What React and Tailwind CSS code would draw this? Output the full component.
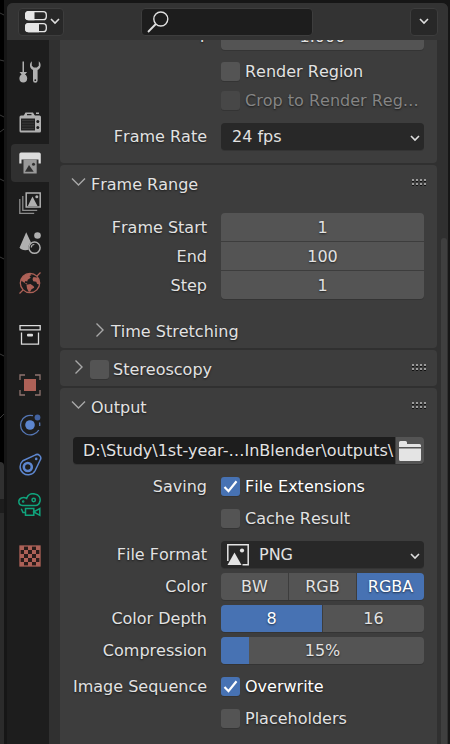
import React from "react";

const GRAY = "#b0b0b0";
const RED = "#ad6157";
const BLUE = "#5d86cf";
const GREEN = "#10a37c";
const DARK = "#1d1d1d";

const icons = {
  Tool: (
    <g fill={GRAY}>
      <path d="M4.500 1.500h1.500V12H4.500z" />
      <path d="M1.500 12h7.600L7 14.400c1.600 1 2.200 2.400 2.200 4.200 0 2.400-1.600 4-3.900 4s-3.900-1.600-3.900-4c0-1.800.6-3.200 2.200-4.200z" />
      <path d="M13.800 1.200C11.200 3.500 11.200 8 15 10v10.400a2.300 2.300 0 0 0 4.600 0V10c3.800-2 3.800-6.500 1.200-8.800V5.800l-2 1.700h-3l-2-1.700z" />
      <circle cx="17.3" cy="20.200" r=".9" fill={DARK} />
    </g>
  ),
  Render: (
    <g fill={GRAY}>
      <path d="M5.500 5 7.500 1.500h7.500l2 3.500zM18 1.500h3v1.500h-3z" />
      <rect x="1.500" y="4.500" width="21.500" height="17" rx="1.500" />
      <path d="M9 3h4.500v1.200H9zM3 7.500h14v12H3z" fill="#222" />
      <path d="M4 9.500h12M4 12.200h12M4 14.900h12M4 17.600h12" stroke="#383838" strokeWidth="1" />
      <circle cx="19.800" cy="10.500" r="1.500" fill={DARK} />
      <circle cx="19.800" cy="16.500" r="1.500" fill={DARK} />
    </g>
  ),
  Output: (
    <g>
      <path d="M3 1.500h18a1.800 1.800 0 0 1 1.800 1.800V12.500h-2.300V8.500h-17v4H1.300V3.300A1.800 1.800 0 0 1 3 1.500z" fill="#dcdcdc" />
      <path d="M5.500 8.500h13.200V22.500H5.500z" fill="#999" />
      <path d="M7 20.800 11 14l4.700 6.800z" fill="#303030" />
      <circle cx="15.500" cy="13.300" r="1.500" fill="#303030" />
    </g>
  ),
  "View Layer": (
    <g fill="none" stroke={GRAY}>
      <path d="M1.800 8v14.300h14.400M4.800 5v14.300h14.400" strokeWidth="1.300" stroke="#8c8c8c" />
      <rect x="8.200" y="2" width="14" height="14" strokeWidth="1.500" />
      <path d="m9.800 15 4.700-9.500L19.500 15z" fill={GRAY} stroke="none" />
      <circle cx="18.800" cy="5.700" r="1.500" fill={GRAY} stroke="none" />
    </g>
  ),
  Scene: (
    <g fill={GRAY}>
      <path d="M8.200 1.200 13 11.500c-2.500 2-3 4.500-2.300 7.200-4 1-7.500.2-9.200-2z" />
      <circle cx="19.500" cy="4.500" r="3.300" />
      <circle cx="16.500" cy="16.700" r="5.600" fill={DARK} stroke={GRAY} strokeWidth="1.500" />
      <path d="M13.300 16.500a3 3 0 0 1 3-3" fill="none" stroke={GRAY} strokeWidth="1.200" />
    </g>
  ),
  World: (
    <g fill={RED}>
      <circle cx="12" cy="12" r="9.700" fill="none" stroke={RED} strokeWidth="1.300" />
      <path d="M1.500 22.500 5 19M19 5l3.500-3.500" stroke={RED} strokeWidth="1.300" />
      <path d="M3 8.500C4.500 5 8 2.700 12 2.500l1.500 1.800-2 .7 1.200 1.700-3 2.100-.4 1.800-2-.6-.6 1.700 2.500.7-.3 1.200L3 9.500zM8.500 13.800l4-.8 3.200 2.200.5 1.600-2.700 1.400-1.300 2.500h-1.500L9 17.500zM15.500 6l4.500.7 1.300 3.300.2 3.500-2.300-.5-1-2.200-3-.6-.7-2.300z" />
    </g>
  ),
  Collection: (
    <g fill="none" stroke="#dcdcdc" strokeWidth="1.300">
      <path d="M2 3.700h20.200v4.200H2zM3.500 10.500v11.700h17V10.500" />
      <rect x="9" y="11.700" width="6" height="2.800" rx="1" fill="#dcdcdc" stroke="none" />
    </g>
  ),
  Object: (
    <g>
      <path d="M6 6h12v12H6z" fill={RED} />
      <path d="M2 7V2h5M17 2h5v5M22 17v5h-5M7 22H2v-5" fill="none" stroke="#8e736f" strokeWidth="1.300" />
    </g>
  ),
  Physics: (
    <g fill={BLUE}>
      <circle cx="12" cy="12" r="4.800" />
      <circle cx="19.500" cy="4.500" r="2.900" fill="#4262a0" />
      <path d="M15 2.700A9.800 9.800 0 1 0 20.800 17M21.500 9.500a9.800 9.800 0 0 1 .2 3.500" fill="none" stroke="#5577b5" strokeWidth="1.300" />
    </g>
  ),
  Constraints: (
    <g fill="none" stroke={BLUE}>
      <path d="M4.800 7.800 17 2.200A3.600 3.600 0 0 1 22.200 7L17.200 17.500A8 8 0 1 1 4.800 7.800z" strokeWidth="1.500" />
      <circle cx="9.800" cy="14" r="4" strokeWidth="2.600" />
      <circle cx="18.200" cy="5.900" r="1.300" fill={BLUE} stroke="none" />
    </g>
  ),
  Data: (
    <g fill="none" stroke={GREEN} strokeWidth="1.500">
      <path d="M4.500 12.500a4 4 0 0 1-3.700-4c0-3.200 4.400-5.300 7.800-3C10 .8 14 .2 17 1c4 .8 5.700 4 5 7.300-.6 2.500-2.500 4.200-4.500 4.200z" />
      <circle cx="15.700" cy="7" r="1.700" />
      <circle cx="5.200" cy="8.500" r=".5" />
      <path d="M7.500 15.500h8.300v6.800H7.500zM15.800 18.900l6-3.400v6.800zM7.500 19.500H5l-1.700-3.800" />
    </g>
  ),
  Texture: (
    <g>
      <rect x="2" y="2" width="20" height="20" fill="#291c1a" stroke={RED} strokeWidth="1.300" />
      <path d="M2 2h4v4H2zM10 2h4v4h-4zM18 2h4v4h-4zM6 6h4v4H6zM14 6h4v4h-4zM2 10h4v4H2zM10 10h4v4h-4zM18 10h4v4h-4zM6 14h4v4H6zM14 14h4v4h-4zM2 18h4v4H2zM10 18h4v4h-4zM18 18h4v4h-4z" fill={RED} />
    </g>
  ),
};

const tabGroups = [
  ["Tool"],
  ["Render", "Output", "View Layer", "Scene", "World"],
  ["Collection"],
  ["Object", "Physics", "Constraints", "Data"],
  ["Texture"],
];

const raised = "shadow-[0_1px_0_#343434]";

function Chevron({ className = "" }) {
  return (
    <svg aria-hidden="true" viewBox="0 0 10 7" className={`h-[7px] w-[10px] ${className}`}>
      <path d="m1 1 4 4 4-4" fill="none" stroke="#dedede" strokeWidth="1.600" />
    </svg>
  );
}

function Disclosure({ open }) {
  return (
    <svg aria-hidden="true" viewBox="0 0 16 16" className="size-4 shrink-0">
      <path
        d={open ? "m2 4.500 6.500 6.500L15 4.500" : "m5.500 1.500 6.500 6.500-6.500 6.500"}
        fill="none"
        stroke="#a8a8a8"
        strokeWidth="1.400"
      />
    </svg>
  );
}

function Grip() {
  return (
    <svg aria-hidden="true" viewBox="0 0 14 7" className="mb-1 ml-auto h-[7px] w-[14px]">
      {[0, 4, 8, 12].map((x) => (
        <g key={x}>
          <path d={`M${x} 0h2v2h-2zM${x} 4h2v2h-2z`} fill="#9a9a9a" />
          <path d={`M${x} 2h2v1h-2zM${x} 6h2v1h-2z`} fill="#111" />
        </g>
      ))}
    </svg>
  );
}

function PanelHeader({ title, open, children }) {
  return (
    <div className="flex h-9 items-center pl-[10px] pr-[11px] pt-0.5">
      <button type="button" aria-expanded={open} aria-label={title} className="mb-1 flex">
        <Disclosure open={open} />
      </button>
      {children || <h2 className="ml-[5px]">{title}</h2>}
      <Grip />
    </div>
  );
}

function Tick({ id, checked, disabled }) {
  return (
    <span className="relative flex size-[19px] shrink-0">
      <input
        id={id}
        type="checkbox"
        defaultChecked={checked}
        disabled={disabled}
        className={`peer size-[19px] appearance-none rounded-[3px] bg-[#545454] checked:bg-[#4772b3] disabled:bg-[#474747] ${raised}`}
      />
      <svg aria-hidden="true" viewBox="0 0 19 19" className="pointer-events-none absolute inset-0 hidden peer-checked:block">
        <path d="m3.500 10 4 4.200 8-10" fill="none" stroke="#fff" strokeWidth="2.200" />
      </svg>
    </span>
  );
}

function CheckRow({ id, label, checked, disabled, lead = "" }) {
  return (
    <div className="flex h-[19px] items-center gap-[14px]">
      <span className="w-[134px] shrink-0 whitespace-nowrap text-right">{lead}</span>
      <div className="flex min-w-0 flex-1 items-center gap-[5px]">
        <Tick id={id} checked={checked} disabled={disabled} />
        <label
          htmlFor={id}
          className={`whitespace-nowrap ${disabled ? "text-[#858585]" : checked ? "text-white" : ""}`}
        >
          {label}
        </label>
      </div>
    </div>
  );
}

function Row({ label, htmlFor, children }) {
  return (
    <div className="flex items-center gap-[14px]">
      <label htmlFor={htmlFor} className="w-[134px] shrink-0 whitespace-nowrap text-right">
        {label}
      </label>
      <div className="min-w-0 flex-1">{children}</div>
    </div>
  );
}

function NumberField({ id, value, round = "" }) {
  return (
    <input
      id={id}
      type="text"
      inputMode="numeric"
      defaultValue={value}
      className={`block h-7 w-full bg-[#545454] text-center [text-shadow:inherit] ${round}`}
    />
  );
}

function Dropdown({ id, value, pad, children }) {
  return (
    <div className={`relative h-[27px] rounded bg-[#282828] ${raised}`}>
      <select id={id} className={`h-[27px] w-full appearance-none bg-transparent ${pad}`}>
        <option>{value}</option>
      </select>
      {children}
      <Chevron className="pointer-events-none absolute right-1 top-3" />
    </div>
  );
}

function Choice({ name, options, selected }) {
  return (
    <div role="group" aria-label={name} className={`flex h-[27px] gap-px overflow-hidden rounded ${raised}`}>
      {options.map((o) => (
        <button
          key={o}
          type="button"
          aria-pressed={o === selected}
          className={`flex-1 [text-shadow:inherit] ${o === selected ? "bg-[#4772b3] text-white" : "bg-[#545454]"}`}
        >
          {o}
        </button>
      ))}
    </div>
  );
}

export default function App() {
  return (
    <div className="flex h-screen overflow-hidden bg-[#161616] font-['DejaVu_Sans',sans-serif] text-base leading-[19px] text-[#e2e2e2] [font-kerning:none]">
      <div className="flex w-1 shrink-0 flex-col bg-black">
        <svg aria-hidden="true" viewBox="0 0 4 462" className="h-[462px] w-1">
          <path
            d="M0 13l4 2M0 60l4 1M0 115l4 2M0 132l4-3M0 179l4 2M0 257l4 2M0 354l4 2M0 418l4-4"
            fill="none"
            stroke="#3a3a3a"
          />
        </svg>
        <div className="h-[37px] rounded-tr bg-[#303030]" />
        <div className="h-[14px] bg-[#1d1d1d]" />
        <div className="flex-1 bg-[#2b2b2b]" />
      </div>
      <div className="ml-[3px] mr-[2px] mt-[3px] flex min-w-0 flex-1 flex-col overflow-hidden rounded-t-md bg-[#303030]">
        <header className="flex h-[37px] shrink-0 items-center justify-between bg-[#333333] pl-[11px] pr-[10px]">
          <button
            type="button"
            aria-label="Editor type"
            className="flex h-7 w-[46px] items-center gap-[3px] rounded border border-[#3d3d3d] bg-[#282828] pl-1.5"
          >
            <svg aria-hidden="true" viewBox="0 0 22 22" className="size-[22px] shrink-0">
              <rect x=".7" y=".7" width="20.600" height="8" rx="3" fill="none" stroke="#e6e6e6" strokeWidth="1.300" />
              <path d="M3.500 0H9.500v9.300h-6A3 3 0 0 1 0 6V3.500A3.500 3.500 0 0 1 3.500 0z" fill="#e6e6e6" />
              <rect x=".7" y="12.700" width="20.600" height="8" rx="3" fill="none" stroke="#e6e6e6" strokeWidth="1.300" />
              <path d="M3.500 12H14v9.300H3.500A3.400 3.400 0 0 1 0 18v-2.500A3.500 3.500 0 0 1 3.500 12z" fill="#e6e6e6" />
            </svg>
            <Chevron />
          </button>
          <div className="ml-[22px] flex h-7 w-[172px] items-center rounded border border-[#3d3d3d] bg-[#1d1d1d] pl-[5px]">
            <svg aria-hidden="true" viewBox="0 0 22 22" className="size-[22px] shrink-0">
              <circle cx="13.800" cy="8" r="7" fill="none" stroke="#e0e0e0" strokeWidth="1.400" />
              <path d="M8.800 13 1 21" stroke="#e0e0e0" strokeWidth="1.800" />
            </svg>
            <input type="search" aria-label="Search" className="min-w-0 flex-1 bg-transparent pl-1 outline-none" />
          </div>
          <button
            type="button"
            aria-label="Options"
            className="ml-[43px] flex size-7 items-center justify-center rounded border border-[#3d3d3d] bg-[#282828]"
          >
            <Chevron />
          </button>
        </header>

        <div className="flex min-h-0 flex-1">
          <nav aria-label="Properties" className="flex w-[42px] shrink-0 flex-col gap-[13px] bg-[#1d1d1d] pl-1 pt-[13px]">
            {tabGroups.map((group) => (
              <div key={group[0]} className="flex flex-col gap-0.5">
                {group.map((name) => (
                  <button
                    key={name}
                    type="button"
                    aria-label={name}
                    className={`flex h-[38px] items-center rounded-l pl-[7px] ${name === "Output" ? "bg-[#303030]" : ""}`}
                  >
                    <svg aria-hidden="true" viewBox="0 0 24 24" className="size-6">
                      {icons[name]}
                    </svg>
                  </button>
                ))}
              </div>
            ))}
          </nav>

          <main className="ml-[11px] flex min-w-0 flex-1 flex-col gap-0.5 overflow-hidden [text-shadow:0_1px_2px_rgba(0,0,0,0.6)]">
            <section className="-mt-[18px] shrink-0 rounded bg-[#3d3d3d] px-[13px] pb-[13px]">
              <Row label="Y" htmlFor="aspect-y">
                <NumberField id="aspect-y" value="1.000" round={`rounded-b ${raised}`} />
              </Row>
              <div className="mb-[13px] mt-3 flex flex-col gap-[10px]">
                <CheckRow id="region" label="Render Region" />
                <CheckRow id="crop" label="Crop to Render Reg…" disabled />
              </div>
              <Row label="Frame Rate" htmlFor="rate">
                <Dropdown id="rate" value="24 fps" pad="pl-[11px]" />
              </Row>
            </section>

            <section className="shrink-0 rounded bg-[#3d3d3d] pb-[7px]">
              <PanelHeader title="Frame Range" open />
              <div className="mt-3 flex flex-col gap-px px-[13px]">
                <Row label="Frame Start" htmlFor="start">
                  <NumberField id="start" value="1" round="rounded-t" />
                </Row>
                <Row label="End" htmlFor="end">
                  <NumberField id="end" value="100" />
                </Row>
                <Row label="Step" htmlFor="step">
                  <NumberField id="step" value="1" round={`rounded-b ${raised}`} />
                </Row>
              </div>
              <div className="mt-[22px] flex h-5 items-center gap-1 pl-[31px]">
                <button type="button" aria-expanded={false} aria-label="Time Stretching" className="mb-0.5 flex">
                  <Disclosure />
                </button>
                <h3>Time Stretching</h3>
              </div>
            </section>

            <section className="shrink-0 rounded bg-[#3d3d3d]">
              <PanelHeader title="Stereoscopy">
                <div className="ml-1 flex items-center gap-1">
                  <Tick id="stereo" />
                  <label htmlFor="stereo">Stereoscopy</label>
                </div>
              </PanelHeader>
            </section>

            <section className="flex-1 rounded-t bg-[#3d3d3d]">
              <PanelHeader title="Output" open />
              <div className="px-[13px] pt-[13px]">
                <div className={`flex h-[27px] gap-px overflow-hidden rounded ${raised}`}>
                  <input
                    type="text"
                    aria-label="Output path"
                    defaultValue={"D:\\Study\\1st-year-…InBlender\\outputs\\"}
                    className="min-w-0 flex-1 bg-[#1d1d1d] pl-[10px] [font-kerning:normal] [text-shadow:inherit]"
                  />
                  <button type="button" aria-label="Browse" className="flex w-7 items-center justify-center bg-[#545454]">
                    <svg aria-hidden="true" viewBox="0 0 22 20" className="h-5 w-[22px]">
                      <path d="M0 1.500A1.500 1.500 0 0 1 1.500 0h5A1.500 1.500 0 0 1 8 1.500V3h12.500A1.500 1.500 0 0 1 22 4.500V6H0zM0 7.500h22v11a1.500 1.500 0 0 1-1.500 1.500h-19A1.500 1.500 0 0 1 0 18.500z" fill="#e4e4e4" />
                    </svg>
                  </button>
                </div>
                <div className="my-[13px] flex flex-col gap-[13px]">
                  <CheckRow id="ext" lead="Saving" label="File Extensions" checked />
                  <CheckRow id="cache" label="Cache Result" />
                </div>
                <div className="flex flex-col gap-[5px]">
                  <Row label="File Format" htmlFor="format">
                    <Dropdown id="format" value="PNG" pad="pl-[38px]">
                      <svg aria-hidden="true" viewBox="0 0 22 22" className="pointer-events-none absolute left-1.5 top-[3px] size-[22px]">
                        <path d="M.800 17V.800H21.200V20.700H15.500" fill="none" stroke="#e4e4e4" strokeWidth="1.500" />
                        <path d="M.5 21 7.500 8.500l7 12.500z" fill="#e4e4e4" />
                        <circle cx="15" cy="6.500" r="2.100" fill="#e4e4e4" />
                      </svg>
                    </Dropdown>
                  </Row>
                  <Row label="Color">
                    <Choice name="Color" options={["BW", "RGB", "RGBA"]} selected="RGBA" />
                  </Row>
                  <Row label="Color Depth">
                    <Choice name="Color Depth" options={["8", "16"]} selected="8" />
                  </Row>
                  <Row label="Compression" htmlFor="compression">
                    <div className={`relative h-[27px] overflow-hidden rounded bg-[#545454] ${raised}`}>
                      <div className="h-full w-[14%] bg-[#4772b3]" />
                      <output htmlFor="compression" className="absolute inset-0 flex items-center justify-center">
                        15%
                      </output>
                      <input
                        id="compression"
                        type="range"
                        min="0"
                        max="100"
                        defaultValue="15"
                        className="absolute inset-0 w-full opacity-0"
                      />
                    </div>
                  </Row>
                </div>
                <div className="mt-[13px] flex flex-col gap-[13px]">
                  <CheckRow id="overwrite" lead="Image Sequence" label="Overwrite" checked />
                  <CheckRow id="placeholders" label="Placeholders" />
                </div>
              </div>
            </section>
          </main>

          <div aria-hidden="true" className="flex w-[11px] shrink-0 flex-col pl-1 pr-px pt-[198px]">
            <div className="flex-1 rounded-t-full bg-[#3f3f3f]" />
          </div>
        </div>
      </div>
    </div>
  );
}
